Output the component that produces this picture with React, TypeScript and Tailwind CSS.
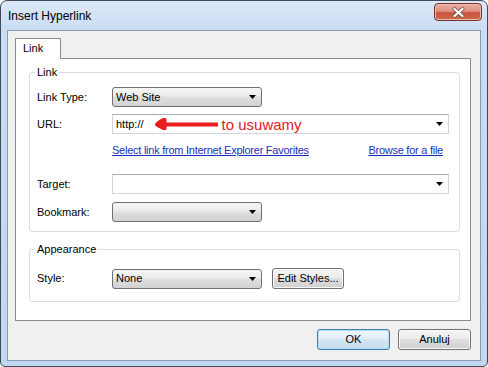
import type { ReactNode } from 'react';

function Caret() {
  return (
    <svg width="7" height="4" viewBox="0 0 7 4" className="shrink-0">
      <path d="M0 0h7L3.5 4z" fill="#000" />
    </svg>
  );
}

function GrayCombo({ value, className }: { value?: string; className: string }) {
  return (
    <div
      className={`${className} h-[20px] flex items-center justify-between pl-[3px] pr-[5px] rounded-[3px] border border-[#707070] bg-[linear-gradient(to_bottom,#f6f6f6_0%,#ececec_45%,#dfdfdf_50%,#d2d2d2_100%)] leading-[13px]`}
    >
      <span>{value}</span>
      <Caret />
    </div>
  );
}

function WhiteCombo({ children, className }: { children?: ReactNode; className: string }) {
  return (
    <div
      className={`${className} h-[20px] flex items-center pl-[3px] pr-[5px] border border-[#d2d5da] border-t-[#abadb3] bg-white leading-[13px]`}
    >
      <div className="flex-1 flex items-center">{children}</div>
      <Caret />
    </div>
  );
}

function Label({ children }: { children: ReactNode }) {
  return <span className="w-[75px] shrink-0 leading-[13px]">{children}</span>;
}

function Button({ children, primary }: { children: ReactNode; primary?: boolean }) {
  return (
    <div
      className={
        primary
          ? 'w-[73px] h-[21px] flex items-center justify-center rounded-[3px] border border-[#3c7fb1] shadow-[inset_0_0_0_1px_#b6dcf3] bg-[linear-gradient(to_bottom,#eef6fb_0%,#e2eef7_45%,#d3e6f3_50%,#c6ddee_100%)] leading-[13px]'
          : 'w-[73px] h-[21px] flex items-center justify-center rounded-[3px] border border-[#707070] shadow-[inset_0_0_0_1px_#fbfbfb] bg-[linear-gradient(to_bottom,#f4f4f4_0%,#ececec_45%,#dedede_50%,#d0d0d0_100%)] leading-[13px]'
      }
    >
      {children}
    </div>
  );
}

export default function App() {
  return (
    <div className="w-[488px] h-[367px] bg-white font-['Liberation_Sans',Arial,sans-serif] text-[11px] text-black">
      <div className="w-full h-full flex flex-col rounded-t-[7px] rounded-b-[5px] border border-[#3f4a56] bg-[linear-gradient(to_bottom,#dbe9f8_0px,#c9ddf4_30px,#c0d7f1_100%)] px-[6px] pb-[5px]">
        {/* Title bar */}
        <div className="h-[29px] flex items-start justify-between">
          <span className="pt-[8px] pl-[1px] text-[12px] leading-[14px]">Insert Hyperlink</span>
          <div className="mt-[2px] -mr-[1px] w-[48px] h-[18px] flex items-center justify-center rounded-[4px] border border-[#7a3026] shadow-[inset_0_0_0_1px_#eeb9ae] bg-[linear-gradient(to_bottom,#eab0a5_0%,#de9282_45%,#c9533d_55%,#cf6a4f_100%)]">
            <svg width="13" height="11" viewBox="0 0 13 11">
              <path d="M2.5 2l8 7M10.5 2l-8 7" stroke="#7a5a55" strokeWidth="3.8" strokeLinecap="round" />
              <path d="M2.5 2l8 7M10.5 2l-8 7" stroke="#fff" strokeWidth="2.2" strokeLinecap="round" />
            </svg>
          </div>
        </div>

        {/* Client area */}
        <div className="flex-1 flex flex-col border border-[#8a9bb0] bg-[#f0f0f0]">
          <div className="pl-[7px] pt-[7px] flex">
            <div className="relative z-10 w-[46px] h-[21px] border border-b-0 border-[#898c95] bg-white pl-[7px] pt-[3px] leading-[13px]">
              Link
            </div>
          </div>

          <div className="ml-[7px] -mt-px w-[456px] h-[263px] border border-[#898c95] bg-white flex flex-col">
            {/* Link group */}
            <fieldset className="mt-[7px] ml-[13px] w-[431px] border border-[#d5dfe5] rounded-[3px] pl-[7px] pr-[9px] pt-[8px] pb-[9px]">
              <legend className="-ml-[2px] px-[2px] leading-[13px]">Link</legend>

              <div className="flex items-center h-[20px]">
                <Label>Link Type:</Label>
                <GrayCombo value="Web Site" className="w-[150px]" />
              </div>

              <div className="mt-[7px] flex items-center h-[20px]">
                <Label>URL:</Label>
                <WhiteCombo className="w-[337px]">
                  <span>http://</span>
                  <svg width="64" height="14" viewBox="0 0 64 14" className="ml-[10px] shrink-0">
                    <path
                      d="M1 7.5C1 6 4 3.5 8 1.5C10.5 0.5 12.5 1 12.5 3L12.5 5.5L64 5.5L64 9.5L12.5 9.5L12.5 11.5C12.5 13.5 10 13.5 8 12.5C4 10.5 1 9 1 7.5Z"
                      fill="#ea1c1c"
                    />
                  </svg>
                  <span className="ml-[4px] text-[15px] leading-[17px] text-[#e3201b]">to usuwamy</span>
                </WhiteCombo>
              </div>

              <div className="mt-[9px] h-[14px] ml-[75px] w-[331px] flex justify-between leading-[14px] tracking-[-0.25px] text-[#1a2fb8] underline">
                <span>Select link from Internet Explorer Favorites</span>
                <span>Browse for a file</span>
              </div>

              <div className="mt-[17px] flex items-center h-[20px]">
                <Label>Target:</Label>
                <WhiteCombo className="w-[337px]" />
              </div>

              <div className="mt-[8px] flex items-center h-[20px]">
                <Label>Bookmark:</Label>
                <GrayCombo className="w-[150px]" />
              </div>
            </fieldset>

            {/* Appearance group */}
            <fieldset className="mt-[11px] ml-[13px] w-[431px] border border-[#d5dfe5] rounded-[3px] pl-[7px] pr-[9px] pt-[12px] pb-[12px]">
              <legend className="-ml-[2px] px-[2px] leading-[13px]">Appearance</legend>
              <div className="flex items-center h-[21px]">
                <Label>Style:</Label>
                <GrayCombo value="None" className="w-[150px]" />
                <div className="ml-[10px] w-[72px] h-[21px] flex items-center justify-center rounded-[3px] border border-[#707070] shadow-[inset_0_0_0_1px_#fbfbfb] bg-[linear-gradient(to_bottom,#f4f4f4_0%,#ececec_45%,#dedede_50%,#d0d0d0_100%)] leading-[13px]">
                  Edit Styles...
                </div>
              </div>
            </fieldset>
          </div>

          <div className="mt-[8px] pr-[9px] flex justify-end gap-[8px]">
            <Button primary>OK</Button>
            <Button>Anuluj</Button>
          </div>
        </div>
      </div>
    </div>
  );
}
